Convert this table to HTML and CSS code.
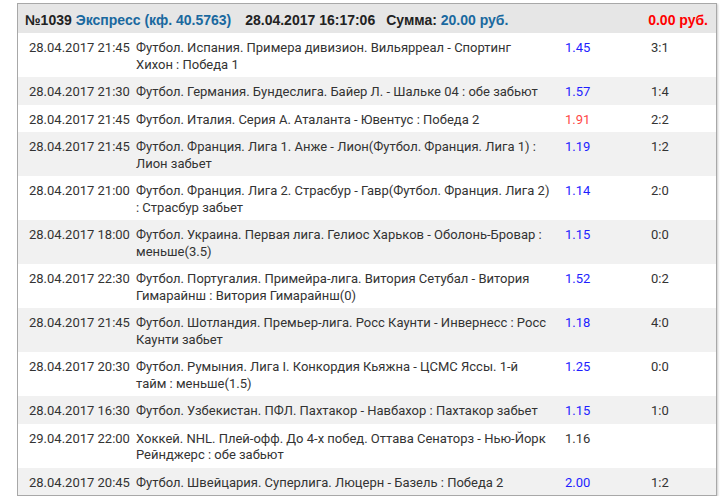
FILE: index.html
```html
<!DOCTYPE html>
<html>
<head lang="ru">
    <meta charset="UTF-8">
    <title>Экспресс №1039</title>
    <link rel="stylesheet" href="styles.css">
</head>
<body>
<div class="bet">
    <div class="bet-head">
        <span class="bet-num">№1039</span>
        <span class="bet-type">Экспресс (кф. 40.5763)</span>
        <span class="bet-date">28.04.2017 16:17:06</span>
        <span class="bet-sum">Сумма: <em>20.00 руб.</em></span>
        <span class="bet-win">0.00 руб.</span>
    </div>
    <div class="bet-row">
        <div class="date">28.04.2017 21:45</div>
        <div class="event">Футбол. Испания. Примера дивизион. Вильярреал - Спортинг Хихон : Победа 1</div>
        <div class="odds up">1.45</div>
        <div class="score">3:1</div>
    </div>
    <div class="bet-row">
        <div class="date">28.04.2017 21:30</div>
        <div class="event">Футбол. Германия. Бундеслига. Байер Л. - Шальке 04 : обе забьют</div>
        <div class="odds up">1.57</div>
        <div class="score">1:4</div>
    </div>
    <div class="bet-row">
        <div class="date">28.04.2017 21:45</div>
        <div class="event">Футбол. Италия. Серия А. Аталанта - Ювентус : Победа 2</div>
        <div class="odds down">1.91</div>
        <div class="score">2:2</div>
    </div>
    <div class="bet-row">
        <div class="date">28.04.2017 21:45</div>
        <div class="event">Футбол. Франция. Лига 1. Анже - Лион(Футбол. Франция. Лига 1) : Лион забьет</div>
        <div class="odds up">1.19</div>
        <div class="score">1:2</div>
    </div>
    <div class="bet-row">
        <div class="date">28.04.2017 21:00</div>
        <div class="event">Футбол. Франция. Лига 2. Страсбур - Гавр(Футбол. Франция. Лига 2) : Страсбур забьет</div>
        <div class="odds up">1.14</div>
        <div class="score">2:0</div>
    </div>
    <div class="bet-row">
        <div class="date">28.04.2017 18:00</div>
        <div class="event">Футбол. Украина. Первая лига. Гелиос Харьков - Оболонь-Бровар : меньше(3.5)</div>
        <div class="odds up">1.15</div>
        <div class="score">0:0</div>
    </div>
    <div class="bet-row">
        <div class="date">28.04.2017 22:30</div>
        <div class="event">Футбол. Португалия. Примейра-лига. Витория Сетубал - Витория Гимарайнш : Витория Гимарайнш(0)</div>
        <div class="odds up">1.52</div>
        <div class="score">0:2</div>
    </div>
    <div class="bet-row">
        <div class="date">28.04.2017 21:45</div>
        <div class="event">Футбол. Шотландия. Премьер-лига. Росс Каунти - Инвернесс : Росс Каунти забьет</div>
        <div class="odds up">1.18</div>
        <div class="score">4:0</div>
    </div>
    <div class="bet-row">
        <div class="date">28.04.2017 20:30</div>
        <div class="event">Футбол. Румыния. Лига I. Конкордия Кьяжна - ЦСМС Яссы. 1-й тайм : меньше(1.5)</div>
        <div class="odds up">1.25</div>
        <div class="score">0:0</div>
    </div>
    <div class="bet-row">
        <div class="date">28.04.2017 16:30</div>
        <div class="event">Футбол. Узбекистан. ПФЛ. Пахтакор - Навбахор : Пахтакор забьет</div>
        <div class="odds up">1.15</div>
        <div class="score">1:0</div>
    </div>
    <div class="bet-row">
        <div class="date">29.04.2017 22:00</div>
        <div class="event">Хоккей. NHL. Плей-офф. До 4-х побед. Оттава Сенаторз - Нью-Йорк Рейнджерс : обе забьют</div>
        <div class="odds">1.16</div>
        <div class="score"></div>
    </div>
    <div class="bet-row">
        <div class="date">28.04.2017 20:45</div>
        <div class="event">Футбол. Швейцария. Суперлига. Люцерн - Базель : Победа 2</div>
        <div class="odds up">2.00</div>
        <div class="score">1:2</div>
    </div>
</div>
</body>
</html>
```

FILE: styles.css
```css
body {
    margin: 3px 0 0 17px;
    background: white;
    font-family: Roboto, "Liberation Sans", sans-serif;
    font-size: 13px;
    color: #333;
}
.bet {
    width: 698px;
    border: 1px solid #a8a8a8;
    box-shadow: 1px 1px 2px rgba(0, 0, 0, 0.2);
}
.bet-head {
    display: flex;
    height: 29px;
    box-sizing: border-box;
    padding: 8px 8px 0 7px;
    background: #e6e6e6;
    font-family: "Liberation Sans", Arial, sans-serif;
    font-size: 14px;
    font-weight: bold;
    line-height: 16.5px;
    color: #222;
}
.bet-type, .bet-sum em {
    color: #1a699f;
    font-style: normal;
}
.bet-type {
    margin-left: 4px;
}
.bet-date {
    margin-left: 14px;
}
.bet-sum {
    margin-left: 11px;
}
.bet-win {
    margin-left: auto;
    color: #f00;
}
.bet-row {
    display: grid;
    grid-template-columns: 107px 429px 86px 1fr;
    padding: 7px 0 4px 11px;
    line-height: 16.5px;
}
.bet-row:nth-child(odd) {
    background: #f1f1f1;
}
.event {
    padding-right: 15px;
}
.odds.up {
    color: #1e1eff;
}
.odds.down {
    color: #ff4747;
}
```
